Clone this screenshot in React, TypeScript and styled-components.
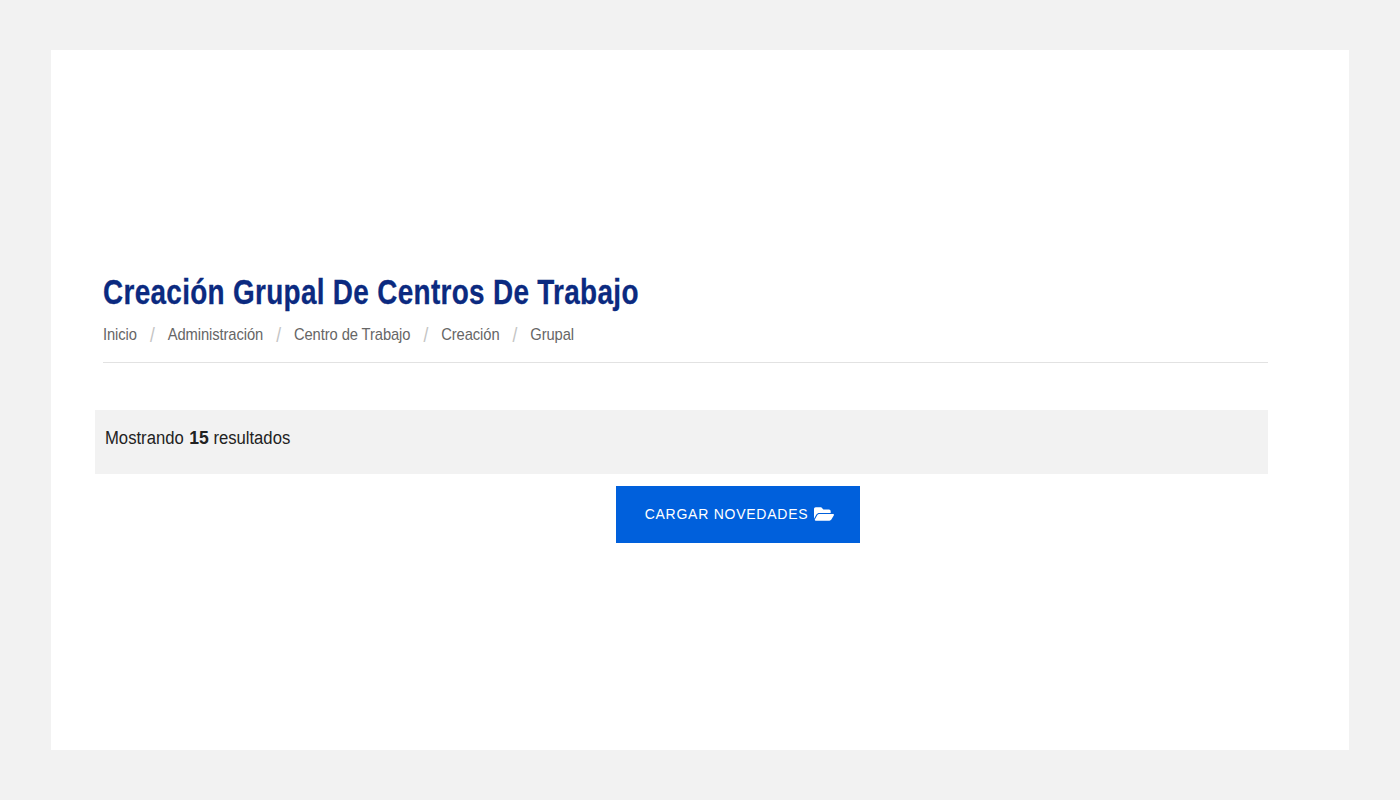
import React from 'react';
import styled, { createGlobalStyle } from 'styled-components';
import { FaFolderOpen } from 'react-icons/fa';

const crumbs = ['Inicio', 'Administración', 'Centro de Trabajo', 'Creación', 'Grupal'];

const GlobalStyle = createGlobalStyle`
  html, body {
    margin: 0;
    background: #f2f2f2;
    font-family: "Liberation Sans", Arial, sans-serif;
  }
`;

const Page = styled.div`
  padding: 50px 51px;
`;

const Card = styled.main`
  box-sizing: border-box;
  height: 700px;
  padding: 222px 81px 0 44px;
  background: #ffffff;
`;

const Header = styled.header`
  margin-left: 8px;
  padding-bottom: 17px;
  border-bottom: 1px solid #e2e2e2;
`;

const Title = styled.h1`
  margin: 0 0 13px 0;
  color: #0b2a80;
  font-size: 35px;
  line-height: 40px;
  font-weight: 700;
  letter-spacing: 0.4px;
  white-space: nowrap;
  -webkit-text-stroke: 0.3px #0b2a80;
  transform: scaleX(0.797);
  transform-origin: left center;
`;

const Breadcrumbs = styled.nav`
  display: flex;
  align-items: center;
  height: 20px;
  color: #666666;
  font-size: 17px;
  letter-spacing: -0.1px;
  white-space: nowrap;
  transform: scaleX(0.867);
  transform-origin: left center;
`;

const Separator = styled.span`
  width: 35.5px;
  color: #c4c4c4;
  font-size: 20px;
  text-align: center;
`;

const ResultsBar = styled.div`
  display: flex;
  align-items: center;
  box-sizing: border-box;
  height: 64px;
  margin-top: 47px;
  padding: 0 0 8px 10px;
  background: #f2f2f2;
  color: #222222;
  font-size: 18px;
`;

const ResultsText = styled.span`
  display: flex;
  align-items: center;
  white-space: nowrap;
  transform: scaleX(0.925);
  transform-origin: left center;
`;

const Count = styled.strong`
  margin: 0 5px 0 6px;
  font-size: 19px;
`;

const UploadButton = styled.button`
  display: flex;
  align-items: center;
  justify-content: center;
  gap: 6px;
  width: 244px;
  height: 57px;
  margin: 12px 0 0 521px;
  padding: 0 0 2px 3px;
  border: none;
  background: #0060dc;
  color: #ffffff;
  font-family: "Liberation Sans", Arial, sans-serif;
  font-size: 14px;
  letter-spacing: 0.75px;
`;

export default function App() {
  return (
    <Page>
      <GlobalStyle />
      <Card>
        <Header>
          <Title>Creación Grupal De Centros De Trabajo</Title>
          <Breadcrumbs>
            {crumbs.map((crumb, i) => (
              <React.Fragment key={crumb}>
                {i > 0 && <Separator>/</Separator>}
                <span>{crumb}</span>
              </React.Fragment>
            ))}
          </Breadcrumbs>
        </Header>
        <ResultsBar>
          <ResultsText>
            Mostrando<Count>15</Count>resultados
          </ResultsText>
        </ResultsBar>
        <UploadButton>
          CARGAR NOVEDADES <FaFolderOpen size={20} />
        </UploadButton>
      </Card>
    </Page>
  );
}
